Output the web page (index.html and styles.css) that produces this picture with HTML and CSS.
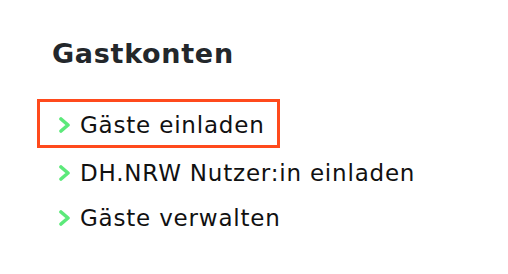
FILE: index.html
```html
<!DOCTYPE html>
<html lang="de">
<head>
<meta charset="utf-8">
<link rel="stylesheet" href="styles.css">
</head>
<body>
<section class="panel">
  <h2 class="title">Gastkonten</h2>
  <ul class="menu">
    <li class="item active">
      <svg class="chev" viewBox="0 0 11 16" width="11" height="16"><polyline points="2,2 9,8 2,14" /></svg>
      <span>Gäste einladen</span>
    </li>
    <li class="item">
      <svg class="chev" viewBox="0 0 11 16" width="11" height="16"><polyline points="2,2 9,8 2,14" /></svg>
      <span>DH.NRW Nutzer:in einladen</span>
    </li>
    <li class="item">
      <svg class="chev" viewBox="0 0 11 16" width="11" height="16"><polyline points="2,2 9,8 2,14" /></svg>
      <span>Gäste verwalten</span>
    </li>
  </ul>
</section>
</body>
</html>
```
FILE: styles.css
```css
html, body {
  margin: 0;
  padding: 0;
  background: #ffffff;
}
body {
  width: 508px;
  height: 274px;
  overflow: hidden;
  font-family: "DejaVu Sans", sans-serif;
}
.panel {
  padding: 37px 0 0 37px;
}
.title {
  margin: 0 0 28px 15px;
  font-size: 27px;
  line-height: 34px;
  font-weight: 700;
  letter-spacing: 0.7px;
  color: #23272b;
}
.menu {
  list-style: none;
  margin: 0;
  padding: 0;
  display: flex;
  flex-direction: column;
  align-items: flex-start;
  gap: 2px;
}
.item {
  display: flex;
  align-items: center;
  height: 43px;
  padding: 2px 14px 0 22px;
  box-sizing: border-box;
  font-size: 23px;
  letter-spacing: 0.8px;
  white-space: nowrap;
  color: #111111;
}
.item.active {
  height: 49px;
  border: 3px solid #ff4a1c;
  padding-left: 19px;
  width: 243px;
}
.chev {
  flex: none;
  margin-right: 10px;
  fill: none;
  stroke: #5ce97a;
  stroke-width: 3.6;
  stroke-linecap: round;
  stroke-linejoin: round;
}
```
